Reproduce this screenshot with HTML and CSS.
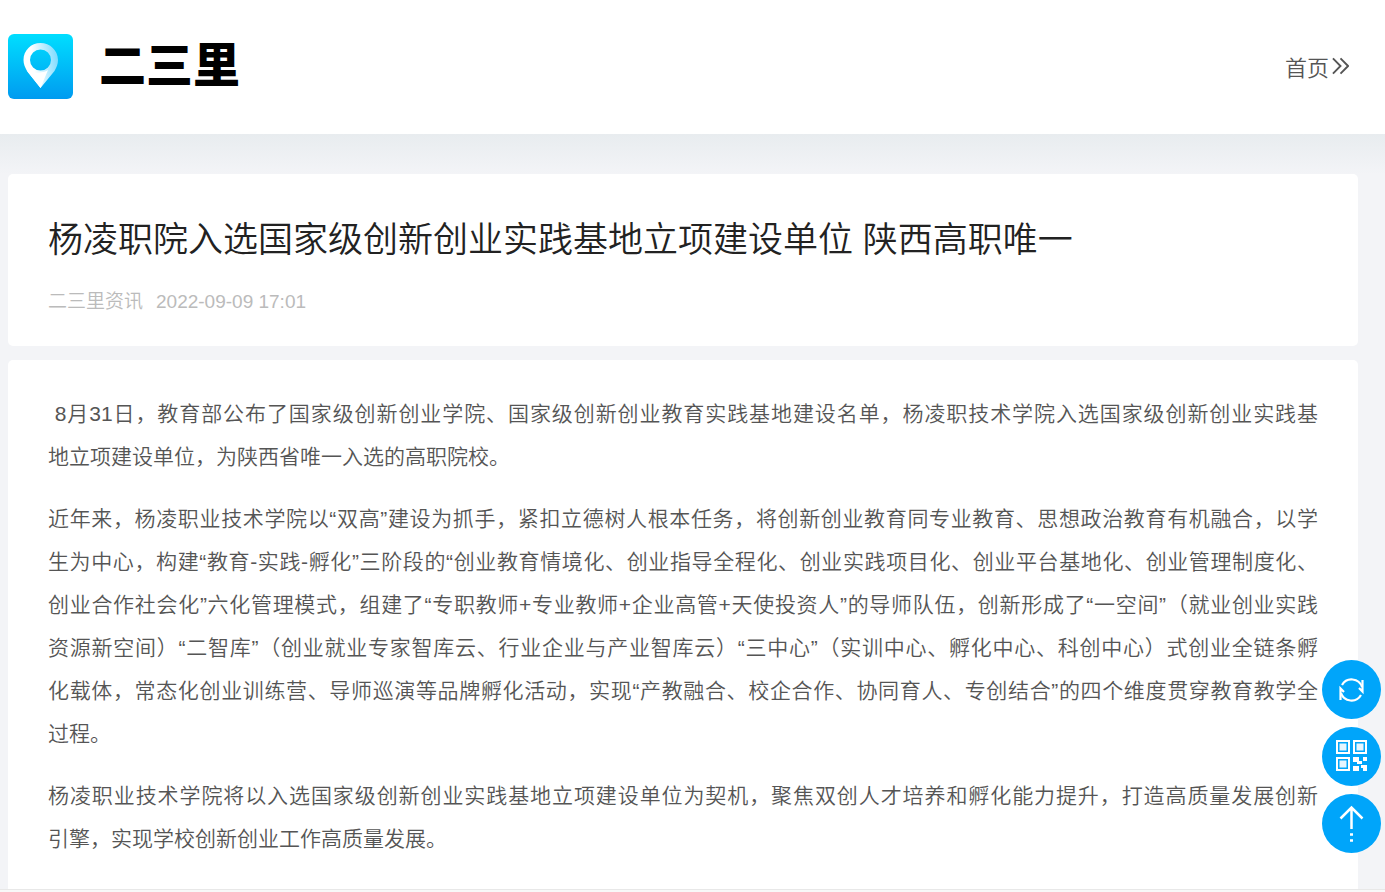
FILE: index.html
```html
<!DOCTYPE html>
<html lang="zh-CN">

<head>
    <meta charset="UTF-8">
    <title>杨凌职院入选国家级创新创业实践基地立项建设单位 陕西高职唯一</title>
    <meta name="viewport" content="width=device-width, initial-scale=1">
    <link rel="stylesheet" href="styles.css">
</head>

<body>
    <header class="header">
        <a class="logo" href="#">
            <svg class="logo-icon" viewBox="0 0 65 65" aria-hidden="true">
                <defs>
                    <linearGradient id="bg" x1="0" y1="0" x2="0" y2="1">
                        <stop offset="0" stop-color="#00deff"/>
                        <stop offset="1" stop-color="#009bf0"/>
                    </linearGradient>
                    <linearGradient id="pin" x1="0" y1="0.6" x2="1" y2="0.4">
                        <stop offset="0.3" stop-color="#fff"/>
                        <stop offset="1" stop-color="#7fdcff"/>
                    </linearGradient>
                </defs>
                <rect width="65" height="65" rx="6" fill="url(#bg)"/>
                <path fill="url(#pin)" fill-rule="evenodd" d="M32.5 9C23 9 15.500 16.500 15.500 26C15.500 30 17 33.500 19 37L32.500 54L46.500 37C48.500 33.500 50 30 50 26C50 16.500 42 9 32.500 9ZM32.500 15.500A10.500 10.500 0 1 1 32.500 36.500A10.500 10.500 0 1 1 32.500 15.500Z"/>
                <path fill="#fff" d="M19 37L32.500 54L40 36C36 39 26 40 19 37Z"/>
            </svg>
            <span class="logo-text">二三里</span>
        </a>
        <a class="home" href="#">首页<svg class="home-icon" viewBox="0 0 18 18" aria-hidden="true"><path d="M1 1L9 9L1 17M9 1L17 9L9 17"/></svg></a>
    </header>

    <main class="content">
        <section class="card title-card">
            <h1>杨凌职院入选国家级创新创业实践基地立项建设单位 陕西高职唯一</h1>
            <div class="info">
                <span>二三里资讯</span>
                <span>2022-09-09 17:01</span>
            </div>
        </section>
        <article class="card article">
            <p>&nbsp;8月31日，教育部公布了国家级创新创业学院、国家级创新创业教育实践基地建设名单，杨凌职技术学院入选国家级创新创业实践基<span class="last">地立项建设单位，为陕西省唯一入选的高职院校。</span></p>
            <p>近年来，杨凌职业技术学院以“双高”建设为抓手，紧扣立德树人根本任务，将创新创业教育同专业教育、思想政治教育有机融合，以学<br>生为中心，构建“教育-实践-孵化”三阶段的“创业教育情境化、创业指导全程化、创业实践项目化、创业平台基地化、创业管理制度化、<br>创业合作社会化”六化管理模式，组建了“专职教师+专业教师+企业高管+天使投资人”的导师队伍，创新形成了“一空间”（就业创业实践<br>资源新空间）“二智库”（创业就业专家智库云、行业企业与产业智库云）“三中心”（实训中心、孵化中心、科创中心）式创业全链条孵<br>化载体，常态化创业训练营、导师巡演等品牌孵化活动，实现“产教融合、校企合作、协同育人、专创结合”的四个维度贯穿教育教学全<span class="last">过程。</span></p>
            <p>杨凌职业技术学院将以入选国家级创新创业实践基地立项建设单位为契机，聚焦双创人才培养和孵化能力提升，打造高质量发展创新<span class="last">引擎，实现学校创新创业工作高质量发展。</span></p>
        </article>
    </main>
    <footer class="footer"></footer>

    <div class="tools">
        <button type="button" class="tool" aria-label="刷新">
            <svg viewBox="0 0 59 59" fill="none" stroke="#fff" stroke-width="2.2">
                <path d="M20 25A11 11 0 0 1 40 27M39 35A11 11 0 0 1 19 33"/>
                <path d="M40.500 20V31.500L37 28M18.500 40V28.500L22 32"/>
            </svg>
        </button>
        <button type="button" class="tool" aria-label="二维码">
            <svg viewBox="0 0 59 59">
                <g fill="none" stroke="#fff" stroke-width="2">
                    <path d="M15 14h12v12h-12zM32 14h12v12h-12zM15 31h12v12h-12z"/>
                </g>
                <g fill="#fff">
                    <path d="M17.500 16.500h7v7h-7zM34.500 16.500h7v7h-7zM17.500 33.500h7v7h-7z" fill-opacity="0.9"/>
                    <path d="M31 30h6v4h3v3h-5v-2h-4zM41 30h4v4h-4zM31 39h6v5h-6zM39 38h6v6h-4v-3h-2z"/>
                </g>
            </svg>
        </button>
        <button type="button" class="tool" aria-label="返回顶部">
            <svg viewBox="0 0 59 59" fill="none" stroke="#fff" stroke-width="2.5">
                <path d="M29.500 35V14M18.500 24.500L29.500 13.500L40.500 24.500"/>
                <path d="M28 40.500h3M28 46.500h3"/>
            </svg>
        </button>
    </div>
</body>

</html>
```
FILE: styles.css
```css
body {
    margin: 0;
    background-color: #f3f4f7;
    color: #555;
    font-family: "Liberation Sans", "Noto Sans CJK SC", sans-serif;
    font-weight: 350;
    text-spacing-trim: space-all;
}

a {
    color: inherit;
    text-decoration: none;
}

.header {
    display: flex;
    align-items: center;
    justify-content: space-between;
    height: 134px;
    padding: 0 36px 2px 8px;
    box-sizing: border-box;
    background-color: #fff;
}

.logo {
    display: flex;
    align-items: center;
    gap: 26px;
}

.logo-icon {
    width: 65px;
    height: 65px;
}

.logo-text {
    padding-bottom: 9px;
    color: #000;
    font-family: "Noto Sans CJK SC", sans-serif;
    font-size: 47px;
    font-weight: 900;
    line-height: 56px;
}

.home {
    display: flex;
    align-items: center;
    gap: 3px;
    font-size: 22px;
}

.home-icon {
    width: 17px;
    height: 18px;
    fill: none;
    stroke: #555;
    stroke-width: 2;
}

.content {
    display: flex;
    flex-direction: column;
    gap: 14px;
    padding: 40px 27px 0 8px;
    background: linear-gradient(#e8ecef, #f3f4f7 40px);
}

.card {
    background-color: #fff;
    border-radius: 5px;
}

.title-card {
    padding: 40px 40px 32px;
}

h1 {
    margin: 0 0 24px;
    color: #222;
    font-size: 35px;
    font-weight: 350;
    line-height: 52px;
}

.info {
    display: flex;
    gap: 13px;
    color: #bbb;
    font-size: 19px;
    line-height: 24px;
}

.article {
    padding: 32px 40px 29px;
    border-radius: 5px 5px 0 0;
}

.article p {
    margin: 0 0 19px;
    font-size: 21px;
    line-height: 43px;
    text-align: justify;
    text-align-last: justify;
}

.article p:last-child {
    margin-bottom: 0;
}

.last {
    display: block;
    text-align-last: left;
}

.footer {
    height: 2px;
    border-top: 1px solid #e8e8e8;
    background-color: #f8f8f8;
}

.tools {
    position: fixed;
    right: 4px;
    bottom: 39px;
    display: flex;
    flex-direction: column;
    gap: 8px;
}

.tool {
    width: 59px;
    height: 59px;
    padding: 0;
    border: none;
    border-radius: 50%;
    background-color: #00a5fa;
    cursor: pointer;
}

.tool svg {
    display: block;
}
```
